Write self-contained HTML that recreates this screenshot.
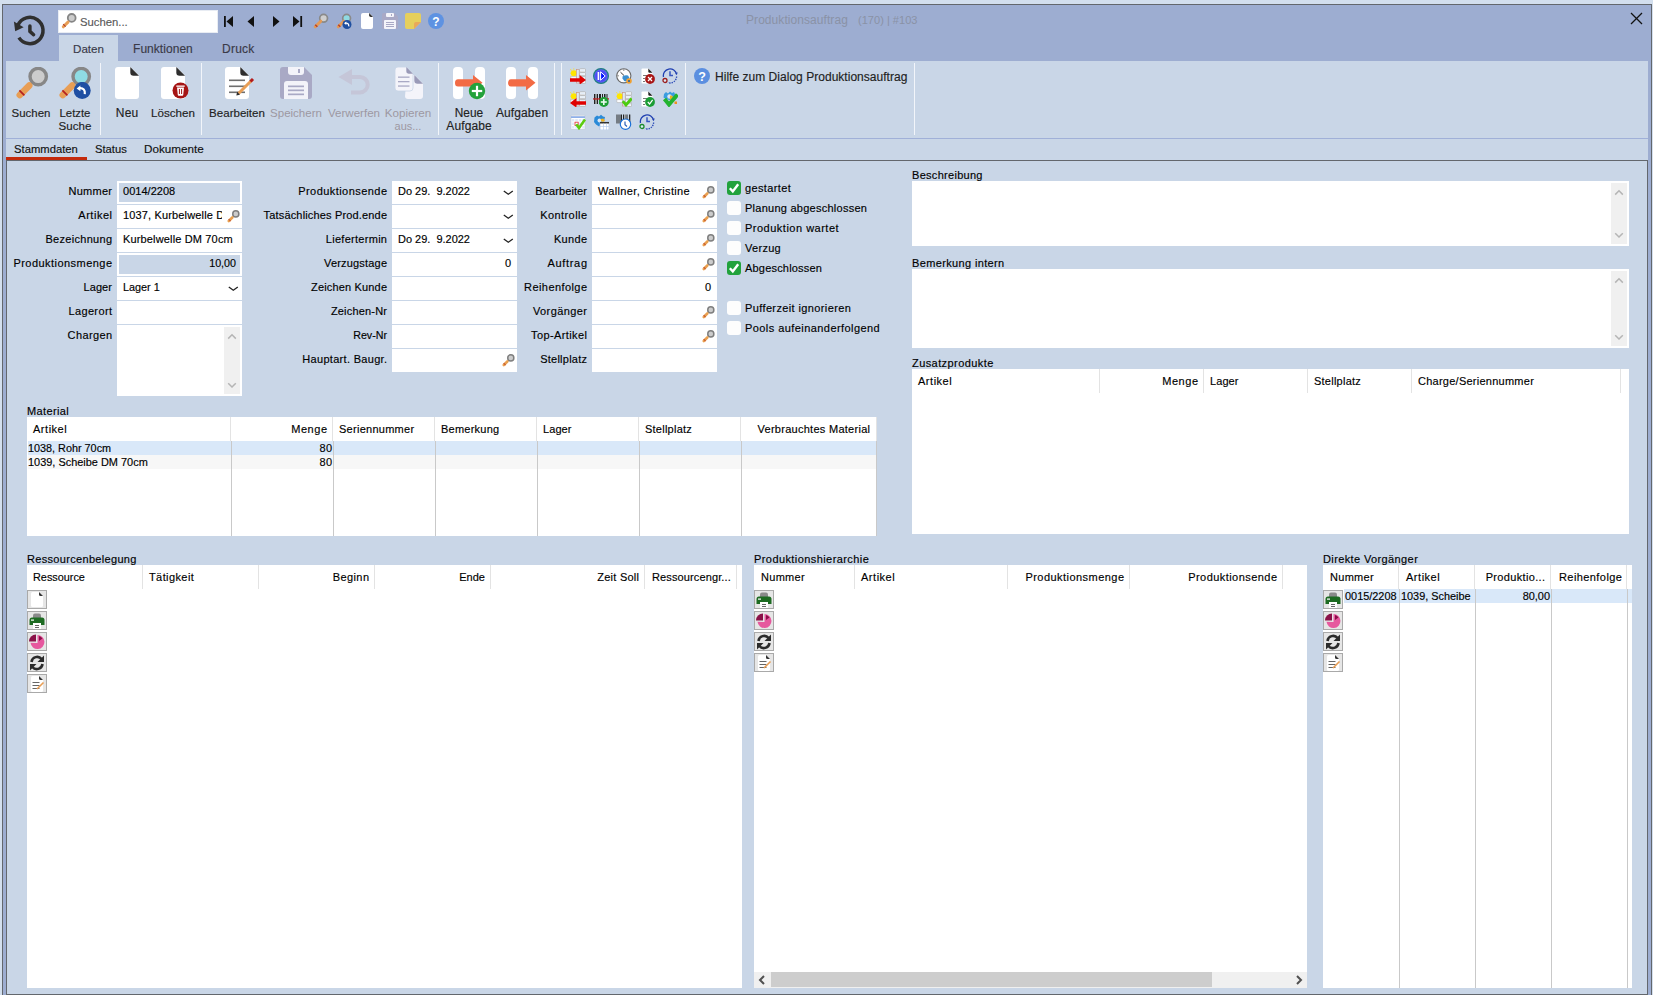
<!DOCTYPE html>
<html><head><meta charset="utf-8"><style>
html,body{margin:0;padding:0;width:1653px;height:995px;overflow:hidden;position:relative;font-family:"Liberation Sans",sans-serif;}
body>div,body>svg{position:absolute;}
.t{position:absolute;white-space:nowrap;line-height:20px;-webkit-text-stroke:0.15px currentColor;}
</style></head><body>
<div style="left:0px;top:0px;width:1653px;height:995px;background:#d3dfee;"></div>
<div style="left:2px;top:4px;width:1650px;height:991px;background:#63676d;"></div>
<div style="left:3px;top:5px;width:1648px;height:990px;background:#9dadd1;"></div>
<div style="left:6px;top:61px;width:1642px;height:77px;background:#c9d6e7;"></div>
<div style="left:6px;top:138px;width:1642px;height:1px;background:#a0b0d8;"></div>
<div style="left:6px;top:139px;width:1642px;height:21px;background:#c9d6e7;"></div>
<div style="left:6px;top:160px;width:1642px;height:835px;background:#63676d;"></div>
<div style="left:7px;top:161px;width:1640px;height:833px;background:#c9d6e7;"></div>
<div style="left:6px;top:157px;width:81px;height:3px;background:#c42a0c;"></div>
<div style="left:59px;top:35px;width:59px;height:26px;background:#c9d6e7;"></div>
<svg style="position:absolute;left:0px;top:0px;" width="50" height="50" viewBox="0 0 50 50"><path d="M 18.9 37.6 A 13.1 13.1 0 1 0 17.9 25.3" fill="none" stroke="#2f2f2f" stroke-width="3.5"/><polygon points="13.9,21.6 15.2,31.2 23.6,27.3" fill="#2f2f2f"/><polyline points="29.9,25.9 29.9,31.4 33.6,34.7" fill="none" stroke="#2f2f2f" stroke-width="3.5" stroke-linecap="round" stroke-linejoin="round"/></svg>
<div style="left:58px;top:10px;width:160px;height:23px;background:#ffffff;box-shadow:inset 0 0 0 1px #e8ecf3"></div>
<svg style="position:absolute;left:61px;top:13px;" width="16" height="16" viewBox="0 0 16 16"><circle cx="10.7" cy="4.9" r="3.9" fill="#cccccc" stroke="#858585" stroke-width="1.8"/><line x1="7" y1="9.1" x2="2.3" y2="13.8" stroke="#e89e55" stroke-width="3" stroke-linecap="round"/><line x1="2.2" y1="11.2" x2="4.6" y2="13.6" stroke="#b5402a" stroke-width="1.2"/></svg>
<div class="t" style="left:80px;top:12px;font-size:11.31px;color:#5a5a5a;">Suchen...</div>
<svg style="position:absolute;left:224px;top:16px;" width="10" height="11" viewBox="0 0 10 11"><rect x="0" y="0" width="1.8" height="11" fill="#111"/><polygon points="9,0 9,11 2.5,5.5" fill="#111"/></svg>
<svg style="position:absolute;left:247px;top:16px;" width="8" height="11" viewBox="0 0 8 11"><polygon points="7,0 7,11 0.5,5.5" fill="#111"/></svg>
<svg style="position:absolute;left:273px;top:16px;" width="8" height="11" viewBox="0 0 8 11"><polygon points="0,0 0,11 6.5,5.5" fill="#111"/></svg>
<svg style="position:absolute;left:293px;top:16px;" width="10" height="11" viewBox="0 0 10 11"><polygon points="0,0 0,11 6.5,5.5" fill="#111"/><rect x="7.3" y="0" width="1.8" height="11" fill="#111"/></svg>
<svg style="position:absolute;left:313px;top:13px;" width="16" height="16" viewBox="0 0 16 16"><circle cx="10.6" cy="5.3" r="3.9" fill="#cfcfcf" stroke="#8a8a8a" stroke-width="1.7"/><line x1="7.8" y1="8.2" x2="2.2" y2="13.8" stroke="#e59a55" stroke-width="3" stroke-linecap="round"/><line x1="3.8" y1="12.2" x2="2.8" y2="13.2" stroke="#b5402a" stroke-width="3"/></svg>
<svg style="position:absolute;left:336px;top:13px;" width="16" height="16" viewBox="0 0 16 16"><circle cx="10.6" cy="5.3" r="3.9" fill="#8fdbe3" stroke="#8a8a8a" stroke-width="1.7"/><line x1="7.8" y1="8.2" x2="2.2" y2="13.8" stroke="#e59a55" stroke-width="3" stroke-linecap="round"/><line x1="3.8" y1="12.2" x2="2.8" y2="13.2" stroke="#b5402a" stroke-width="3"/><circle cx="11" cy="11.5" r="4.5" fill="#1f4fa0"/><path d="M 9.2 10.2 Q 13 9.5 12.8 13.4" fill="none" stroke="#fff" stroke-width="1.3"/><polygon points="8,10.3 10.3,8.6 10.3,12" fill="#fff"/></svg>
<svg style="position:absolute;left:361px;top:13px;" width="13" height="16" viewBox="0 0 13 16"><path d="M2,0 H8.3 L12,3.7 V14 Q12,16 10,16 H2 Q0,16 0,14 V2 Q0,0 2,0 Z" fill="#fff"/><path d="M8.1,0 L12,3.9 H9.8 Q8.1,3.9 8.1,2.2 Z" fill="#2e2e2e"/></svg>
<svg style="position:absolute;left:382px;top:13px;" width="16" height="16" viewBox="0 0 16 16"><path d="M1.5,0 H12.5 L16,3.5 V14.5 Q16,16 14.5,16 H1.5 Q0,16 0,14.5 V1.5 Q0,0 1.5,0 Z" fill="#a9a9c6"/><rect x="4" y="0" width="8" height="4" rx="1" fill="#f4f4fa"/><rect x="9" y="1" width="1" height="2" fill="#a9a9c6"/><rect x="2" y="7" width="12" height="9" rx="1" fill="#f4f4fa"/><rect x="4" y="9" width="8" height="1" fill="#a9a9c6"/><rect x="4" y="11" width="8" height="1" fill="#a9a9c6"/><rect x="4" y="13" width="8" height="1" fill="#a9a9c6"/></svg>
<svg style="position:absolute;left:405px;top:13px;" width="16" height="16" viewBox="0 0 16 16"><path d="M2,0 H14 Q16,0 16,2 V9 L9,16 H2 Q0,16 0,14 V2 Q0,0 2,0 Z" fill="#e6cf5c"/><path d="M16,9 L9,16 V11 Q9,9 11,9 Z" fill="#e9a85a"/></svg>
<svg style="position:absolute;left:428px;top:13px;" width="16" height="16" viewBox="0 0 16 16"><circle cx="8" cy="8" r="8" fill="#5e92e2"/><text x="8" y="12.6" text-anchor="middle" font-family="Liberation Sans" font-weight="bold" font-size="12" fill="#fff">?</text></svg>
<div class="t" style="left:746px;top:10px;font-size:12.00px;color:#8a92a6;letter-spacing:0.063px;-webkit-text-stroke:0">Produktionsauftrag</div>
<div class="t" style="left:858px;top:10px;font-size:11.07px;color:#8a92a6;-webkit-text-stroke:0">(170) | #103</div>
<svg style="position:absolute;left:1630px;top:12px;" width="13" height="13" viewBox="0 0 13 13"><line x1="1" y1="1" x2="12" y2="12" stroke="#111" stroke-width="1.3"/><line x1="12" y1="1" x2="1" y2="12" stroke="#111" stroke-width="1.3"/></svg>
<div class="t" style="left:73px;top:39px;font-size:11.61px;color:#3a3a48;">Daten</div>
<div class="t" style="left:133px;top:39px;font-size:12.00px;color:#3a3a48;letter-spacing:0.047px;">Funktionen</div>
<div class="t" style="left:222px;top:39px;font-size:12.00px;color:#3a3a48;letter-spacing:0.239px;">Druck</div>
<div style="left:100px;top:63px;width:1px;height:72px;background:#f2f5fa;"></div>
<div style="left:201px;top:63px;width:1px;height:72px;background:#f2f5fa;"></div>
<div style="left:438px;top:63px;width:1px;height:72px;background:#f2f5fa;"></div>
<div style="left:554px;top:63px;width:1px;height:72px;background:#f2f5fa;"></div>
<div style="left:561px;top:63px;width:1px;height:72px;background:#f2f5fa;"></div>
<div style="left:685px;top:63px;width:1px;height:72px;background:#f2f5fa;"></div>
<div style="left:914px;top:63px;width:1px;height:72px;background:#f2f5fa;"></div>
<svg style="position:absolute;left:16px;top:67px;" width="34" height="34" viewBox="0 0 34 34"><circle cx="22.2" cy="9.6" r="8.2" fill="#cccccc" stroke="#878787" stroke-width="3.4"/><line x1="16" y1="15.8" x2="12.5" y2="19.3" stroke="#878787" stroke-width="2.6"/><line x1="13.2" y1="18.6" x2="3.8" y2="28" stroke="#e89e55" stroke-width="6.6" stroke-linecap="round"/><line x1="3.4" y1="23.4" x2="8.4" y2="28.4" stroke="#b32020" stroke-width="1.7"/></svg>
<svg style="position:absolute;left:59px;top:67px;" width="34" height="34" viewBox="0 0 34 34"><circle cx="22.2" cy="9.6" r="8.2" fill="#8fdce4" stroke="#878787" stroke-width="3.4"/><line x1="16" y1="15.8" x2="12.5" y2="19.3" stroke="#878787" stroke-width="2.6"/><line x1="13.2" y1="18.6" x2="3.8" y2="28" stroke="#e89e55" stroke-width="6.6" stroke-linecap="round"/><line x1="3.4" y1="23.4" x2="8.4" y2="28.4" stroke="#b32020" stroke-width="1.7"/></svg>
<svg style="position:absolute;left:73px;top:82px;" width="18" height="18" viewBox="0 0 18 18"><circle cx="9.2" cy="8.4" r="8.5" fill="#1f4fa3"/><path d="M 6.2 6.2 Q 12.6 5.6 11.8 12.2" fill="none" stroke="#fff" stroke-width="2.2"/><polygon points="3.6,6.4 7.4,3.4 7.4,9.2" fill="#fff"/></svg>
<div class="t" style="left:-119.00px;width:300px;top:103px;font-size:11.44px;color:#222;text-align:center;">Suchen</div>
<div class="t" style="left:-75.00px;width:300px;top:103px;font-size:11.34px;color:#222;text-align:center;">Letzte</div>
<div class="t" style="left:-75.00px;width:300px;top:116px;font-size:11.57px;color:#222;text-align:center;">Suche</div>
<svg style="position:absolute;left:115px;top:67px;" width="25" height="32" viewBox="0 0 25 32"><path d="M3,0 H15.5 L24,8.5 V29 Q24,32 21,32 H3 Q0,32 0,29 V3 Q0,0 3,0 Z" fill="#fff"/><path d="M15.3,0 L24,8.7 H18.5 Q15.3,8.7 15.3,5.5 Z" fill="#2e2e2e"/></svg>
<div class="t" style="left:-22.93px;width:300px;top:103px;font-size:12.00px;color:#222;text-align:center;letter-spacing:0.142px;">Neu</div>
<svg style="position:absolute;left:161px;top:67px;" width="25" height="32" viewBox="0 0 25 32"><path d="M3,0 H15.5 L24,8.5 V29 Q24,32 21,32 H3 Q0,32 0,29 V3 Q0,0 3,0 Z" fill="#fff"/><path d="M15.3,0 L24,8.7 H18.5 Q15.3,8.7 15.3,5.5 Z" fill="#2e2e2e"/></svg>
<svg style="position:absolute;left:172px;top:82px;" width="17" height="17" viewBox="0 0 17 17"><circle cx="8.5" cy="8.5" r="8" fill="#a51414"/><rect x="4.3" y="3.5" width="8.4" height="1.3" fill="#fff"/><path d="M5,5.5 H12 L11.2,13 Q11.1,13.8 10.3,13.8 H6.7 Q5.9,13.8 5.8,13 Z" fill="#fff"/><rect x="6.9" y="7" width="1" height="5" fill="#a51414"/><rect x="9.1" y="7" width="1" height="5" fill="#a51414"/></svg>
<div class="t" style="left:23.00px;width:300px;top:103px;font-size:11.58px;color:#222;text-align:center;">Löschen</div>
<svg style="position:absolute;left:225px;top:67px;" width="30" height="32" viewBox="0 0 30 32"><path d="M3,0 H15.5 L24,8.5 V29 Q24,32 21,32 H3 Q0,32 0,29 V3 Q0,0 3,0 Z" fill="#fff"/><path d="M15.3,0 L24,8.7 H18.5 Q15.3,8.7 15.3,5.5 Z" fill="#2e2e2e"/><rect x="4" y="12.5" width="16" height="1.6" fill="#6f6f6f"/><rect x="4" y="18.5" width="16" height="1.6" fill="#6f6f6f"/><rect x="4" y="24.5" width="16" height="1.6" fill="#6f6f6f"/><line x1="13.5" y1="26.5" x2="26.5" y2="13.5" stroke="#e89e55" stroke-width="3"/><line x1="25.5" y1="14.5" x2="28" y2="12" stroke="#b31c1c" stroke-width="3"/><polygon points="11.3,28.5 12.2,24.8 15,27.7" fill="#2e2e2e"/></svg>
<div class="t" style="left:87.00px;width:300px;top:103px;font-size:11.54px;color:#222;text-align:center;">Bearbeiten</div>
<svg style="position:absolute;left:280px;top:67px;" width="32" height="32" viewBox="0 0 32 32"><path d="M3,0 H24 L32,8 V29 Q32,32 29,32 H3 Q0,32 0,29 V3 Q0,0 3,0 Z" fill="#a9a9c5"/><path d="M8,0 H24 V5 Q24,8 21,8 H11 Q8,8 8,5 Z" fill="#f3f3f9"/><rect x="18" y="2" width="2" height="4" fill="#a9a9c5"/><path d="M4,17 Q4,14 7,14 H25 Q28,14 28,17 V32 H4 Z" fill="#f3f3f9"/><rect x="8" y="18.5" width="16" height="1.7" fill="#a9a9c5"/><rect x="8" y="22.5" width="16" height="1.7" fill="#a9a9c5"/><rect x="8" y="26.5" width="16" height="1.7" fill="#a9a9c5"/></svg>
<div class="t" style="left:146.00px;width:300px;top:103px;font-size:11.50px;color:#9d98a2;text-align:center;-webkit-text-stroke:0">Speichern</div>
<svg style="position:absolute;left:338px;top:69px;" width="34" height="28" viewBox="0 0 34 28"><path d="M 13 8 H 22 A 7.7 7.7 0 0 1 22 23.4 H 13" fill="none" stroke="#c5c6d8" stroke-width="4"/><polygon points="0.5,8 14,0 14,16" fill="#c5c6d8"/></svg>
<div class="t" style="left:204.00px;width:300px;top:103px;font-size:11.55px;color:#9d98a2;text-align:center;-webkit-text-stroke:0">Verwerfen</div>
<svg style="position:absolute;left:395px;top:67px;" width="29" height="33" viewBox="0 0 29 33"><path d="M12,8 H19.5 L28,16.5 V29 Q28,32 25,32 H13 Q10,32 10,29 Z" fill="#f4f4fa"/><path d="M19.3,8 L28,16.7 H22.5 Q19.3,16.7 19.3,13.5 Z" fill="#9a9ab8"/><path d="M3,0 H11.5 L18,6.5 V21 Q18,24 15,24 H3 Q0,24 0,21 V3 Q0,0 3,0 Z" fill="#f4f4fa" stroke="#c9d6e7" stroke-width="0.8"/><path d="M11.3,0 L18,6.7 H14 Q11.3,6.7 11.3,4 Z" fill="#9a9ab8"/><rect x="3" y="9.5" width="11.5" height="1.3" fill="#a9a9c5"/><rect x="3" y="14" width="11.5" height="1.3" fill="#a9a9c5"/><rect x="3" y="18.4" width="11.5" height="1.3" fill="#a9a9c5"/></svg>
<div class="t" style="left:258.00px;width:300px;top:103px;font-size:11.66px;color:#9d98a2;text-align:center;-webkit-text-stroke:0">Kopieren</div>
<div class="t" style="left:258.00px;width:300px;top:116px;font-size:10.95px;color:#9d98a2;text-align:center;-webkit-text-stroke:0">aus...</div>
<svg style="position:absolute;left:453px;top:67px;" width="34" height="32" viewBox="0 0 34 32"><rect x="0" y="0" width="10" height="32" rx="4" fill="#fff"/><rect x="22" y="0" width="10" height="32" rx="4" fill="#fff"/><path d="M5,12.3 H20 V8 L29.5,15.8 L20,23.5 V19.5 H5 Q2,19.5 2,16 Q2,12.3 5,12.3 Z" fill="#f26b45"/></svg>
<svg style="position:absolute;left:468px;top:82px;" width="18" height="18" viewBox="0 0 18 18"><circle cx="9" cy="9" r="8.2" fill="#23a13b"/><rect x="7.9" y="3.8" width="2.2" height="10.4" fill="#fff"/><rect x="3.8" y="7.9" width="10.4" height="2.2" fill="#fff"/></svg>
<div class="t" style="left:319.00px;width:300px;top:103px;font-size:11.88px;color:#222;text-align:center;">Neue</div>
<div class="t" style="left:319.07px;width:300px;top:116px;font-size:12.00px;color:#222;text-align:center;letter-spacing:0.130px;">Aufgabe</div>
<svg style="position:absolute;left:506px;top:67px;" width="34" height="32" viewBox="0 0 34 32"><rect x="0" y="0" width="10" height="32" rx="4" fill="#fff"/><rect x="22" y="0" width="10" height="32" rx="4" fill="#fff"/><path d="M5,12.3 H20 V8 L29.5,15.8 L20,23.5 V19.5 H5 Q2,19.5 2,16 Q2,12.3 5,12.3 Z" fill="#f26b45"/></svg>
<div class="t" style="left:372.06px;width:300px;top:103px;font-size:12.00px;color:#222;text-align:center;letter-spacing:0.116px;">Aufgaben</div>
<svg style="position:absolute;left:694px;top:68px;" width="16" height="16" viewBox="0 0 16 16"><circle cx="8" cy="8" r="8" fill="#5b8fe0"/><text x="8" y="12.7" text-anchor="middle" font-family="Liberation Sans" font-weight="bold" font-size="12.5" fill="#fff">?</text></svg>
<div class="t" style="left:715px;top:67px;font-size:12.00px;color:#222;letter-spacing:0.028px;">Hilfe zum Dialog Produktionsauftrag</div>
<div class="t" style="left:14px;top:139px;font-size:11.25px;color:#111;">Stammdaten</div>
<div class="t" style="left:95px;top:139px;font-size:11.21px;color:#111;">Status</div>
<div class="t" style="left:144px;top:139px;font-size:11.69px;color:#111;">Dokumente</div>
<div class="t" style="right:1540.71px;top:181px;font-size:11.00px;color:#000;text-align:right;letter-spacing:0.286px;">Nummer</div>
<div class="t" style="right:1540.48px;top:205px;font-size:11.00px;color:#000;text-align:right;letter-spacing:0.523px;">Artikel</div>
<div class="t" style="right:1540.70px;top:229px;font-size:11.00px;color:#000;text-align:right;letter-spacing:0.299px;">Bezeichnung</div>
<div class="t" style="right:1540.54px;top:253px;font-size:11.00px;color:#000;text-align:right;letter-spacing:0.458px;">Produktionsmenge</div>
<div class="t" style="right:1540.91px;top:277px;font-size:11.00px;color:#000;text-align:right;letter-spacing:0.090px;">Lager</div>
<div class="t" style="right:1540.63px;top:301px;font-size:11.00px;color:#000;text-align:right;letter-spacing:0.374px;">Lagerort</div>
<div class="t" style="right:1540.63px;top:325px;font-size:11.00px;color:#000;text-align:right;letter-spacing:0.366px;">Chargen</div>
<div style="left:117px;top:181px;width:125px;height:23px;background:#ffffff;"></div>
<div style="left:119px;top:183px;width:121px;height:19px;background:#c9d6e7;"></div>
<div class="t" style="left:123px;top:181px;font-size:11.00px;color:#000;letter-spacing:0.025px;">0014/2208</div>
<div style="left:117px;top:205px;width:125px;height:23px;background:#ffffff;"></div>
<svg style="position:absolute;left:227px;top:210px;" width="13" height="13" viewBox="0 0 13 13"><circle cx="8.8" cy="3.9" r="3.05" fill="#cccccc" stroke="#7e7e7e" stroke-width="1.5"/><line x1="5.3" y1="7.5" x2="1.8" y2="11" stroke="#e9a050" stroke-width="2.6" stroke-linecap="round"/><line x1="1.7" y1="9.2" x2="3.6" y2="11.1" stroke="#c85a30" stroke-width="1.2"/></svg>
<div class="t" style="left:123px;top:205px;font-size:11.00px;color:#000;width:99px;overflow:hidden;letter-spacing:0.15px">1037, Kurbelwelle DM 70cm</div>
<div style="left:117px;top:229px;width:125px;height:23px;background:#ffffff;"></div>
<div class="t" style="left:123px;top:229px;font-size:11.00px;color:#000;letter-spacing:0.151px;">Kurbelwelle DM 70cm</div>
<div style="left:117px;top:253px;width:125px;height:23px;background:#ffffff;"></div>
<div style="left:119px;top:255px;width:121px;height:19px;background:#c9d6e7;"></div>
<div class="t" style="right:1417.00px;top:253px;font-size:10.71px;color:#000;text-align:right;">10,00</div>
<div style="left:117px;top:277px;width:125px;height:23px;background:#ffffff;"></div>
<div class="t" style="left:123px;top:277px;font-size:10.85px;color:#000;">Lager 1</div>
<svg style="position:absolute;left:228px;top:286px;" width="12" height="6" viewBox="0 0 12 6"><polyline points="0.8,0.9 5.3,4.3 9.8,0.9" fill="none" stroke="#222" stroke-width="1.3"/></svg>
<div style="left:117px;top:301px;width:125px;height:23px;background:#ffffff;"></div>
<div style="left:117px;top:325px;width:125px;height:71px;background:#fff;"></div>
<div style="left:224px;top:327px;width:16px;height:67px;background:#f0f0f0;"></div>
<svg style="position:absolute;left:227px;top:333px;" width="10" height="7" viewBox="0 0 10 7"><polyline points="1.2,5.6 5,1.8 8.8,5.6" fill="none" stroke="#b5b5b5" stroke-width="1.5"/></svg>
<svg style="position:absolute;left:227px;top:382px;" width="10" height="7" viewBox="0 0 10 7"><polyline points="1.2,1.2 5,5 8.8,1.2" fill="none" stroke="#b5b5b5" stroke-width="1.5"/></svg>
<div class="t" style="right:1265.55px;top:181px;font-size:11.00px;color:#000;text-align:right;letter-spacing:0.446px;">Produktionsende</div>
<div class="t" style="right:1265.84px;top:205px;font-size:11.00px;color:#000;text-align:right;letter-spacing:0.161px;">Tatsächliches Prod.ende</div>
<div class="t" style="right:1265.72px;top:229px;font-size:11.00px;color:#000;text-align:right;letter-spacing:0.284px;">Liefertermin</div>
<div class="t" style="right:1265.82px;top:253px;font-size:11.00px;color:#000;text-align:right;letter-spacing:0.184px;">Verzugstage</div>
<div class="t" style="right:1265.84px;top:277px;font-size:11.00px;color:#000;text-align:right;letter-spacing:0.158px;">Zeichen Kunde</div>
<div class="t" style="right:1265.81px;top:301px;font-size:11.00px;color:#000;text-align:right;letter-spacing:0.188px;">Zeichen-Nr</div>
<div class="t" style="right:1266.00px;top:325px;font-size:10.67px;color:#000;text-align:right;">Rev-Nr</div>
<div class="t" style="right:1265.69px;top:349px;font-size:11.00px;color:#000;text-align:right;letter-spacing:0.306px;">Hauptart. Baugr.</div>
<div style="left:392px;top:181px;width:125px;height:23px;background:#ffffff;"></div>
<div class="t" style="left:398px;top:181px;font-size:10.97px;color:#000;">Do 29.&nbsp; 9.2022</div>
<svg style="position:absolute;left:503px;top:190px;" width="12" height="6" viewBox="0 0 12 6"><polyline points="0.8,0.9 5.3,4.3 9.8,0.9" fill="none" stroke="#222" stroke-width="1.3"/></svg>
<div style="left:392px;top:205px;width:125px;height:23px;background:#ffffff;"></div>
<svg style="position:absolute;left:503px;top:214px;" width="12" height="6" viewBox="0 0 12 6"><polyline points="0.8,0.9 5.3,4.3 9.8,0.9" fill="none" stroke="#222" stroke-width="1.3"/></svg>
<div style="left:392px;top:229px;width:125px;height:23px;background:#ffffff;"></div>
<div class="t" style="left:398px;top:229px;font-size:10.97px;color:#000;">Do 29.&nbsp; 9.2022</div>
<svg style="position:absolute;left:503px;top:238px;" width="12" height="6" viewBox="0 0 12 6"><polyline points="0.8,0.9 5.3,4.3 9.8,0.9" fill="none" stroke="#222" stroke-width="1.3"/></svg>
<div style="left:392px;top:253px;width:125px;height:23px;background:#ffffff;"></div>
<div class="t" style="right:1142.00px;top:253px;font-size:11.00px;color:#000;text-align:right;">0</div>
<div style="left:392px;top:277px;width:125px;height:23px;background:#ffffff;"></div>
<div style="left:392px;top:301px;width:125px;height:23px;background:#ffffff;"></div>
<div style="left:392px;top:325px;width:125px;height:23px;background:#ffffff;"></div>
<div style="left:392px;top:349px;width:125px;height:23px;background:#ffffff;"></div>
<svg style="position:absolute;left:502px;top:354px;" width="13" height="13" viewBox="0 0 13 13"><circle cx="8.8" cy="3.9" r="3.05" fill="#cccccc" stroke="#7e7e7e" stroke-width="1.5"/><line x1="5.3" y1="7.5" x2="1.8" y2="11" stroke="#e9a050" stroke-width="2.6" stroke-linecap="round"/><line x1="1.7" y1="9.2" x2="3.6" y2="11.1" stroke="#c85a30" stroke-width="1.2"/></svg>
<div class="t" style="right:1065.90px;top:181px;font-size:11.00px;color:#000;text-align:right;letter-spacing:0.104px;">Bearbeiter</div>
<div class="t" style="right:1065.58px;top:205px;font-size:11.00px;color:#000;text-align:right;letter-spacing:0.422px;">Kontrolle</div>
<div class="t" style="right:1065.68px;top:229px;font-size:11.00px;color:#000;text-align:right;letter-spacing:0.322px;">Kunde</div>
<div class="t" style="right:1065.34px;top:253px;font-size:11.00px;color:#000;text-align:right;letter-spacing:0.655px;">Auftrag</div>
<div class="t" style="right:1065.58px;top:277px;font-size:11.00px;color:#000;text-align:right;letter-spacing:0.418px;">Reihenfolge</div>
<div class="t" style="right:1065.58px;top:301px;font-size:11.00px;color:#000;text-align:right;letter-spacing:0.417px;">Vorgänger</div>
<div class="t" style="right:1065.60px;top:325px;font-size:11.00px;color:#000;text-align:right;letter-spacing:0.403px;">Top-Artikel</div>
<div class="t" style="right:1065.76px;top:349px;font-size:11.00px;color:#000;text-align:right;letter-spacing:0.240px;">Stellplatz</div>
<div style="left:592px;top:181px;width:125px;height:23px;background:#ffffff;"></div>
<div class="t" style="left:598px;top:181px;font-size:11.00px;color:#000;letter-spacing:0.347px;">Wallner, Christine</div>
<svg style="position:absolute;left:702px;top:186px;" width="13" height="13" viewBox="0 0 13 13"><circle cx="8.8" cy="3.9" r="3.05" fill="#cccccc" stroke="#7e7e7e" stroke-width="1.5"/><line x1="5.3" y1="7.5" x2="1.8" y2="11" stroke="#e9a050" stroke-width="2.6" stroke-linecap="round"/><line x1="1.7" y1="9.2" x2="3.6" y2="11.1" stroke="#c85a30" stroke-width="1.2"/></svg>
<div style="left:592px;top:205px;width:125px;height:23px;background:#ffffff;"></div>
<svg style="position:absolute;left:702px;top:210px;" width="13" height="13" viewBox="0 0 13 13"><circle cx="8.8" cy="3.9" r="3.05" fill="#cccccc" stroke="#7e7e7e" stroke-width="1.5"/><line x1="5.3" y1="7.5" x2="1.8" y2="11" stroke="#e9a050" stroke-width="2.6" stroke-linecap="round"/><line x1="1.7" y1="9.2" x2="3.6" y2="11.1" stroke="#c85a30" stroke-width="1.2"/></svg>
<div style="left:592px;top:229px;width:125px;height:23px;background:#ffffff;"></div>
<svg style="position:absolute;left:702px;top:234px;" width="13" height="13" viewBox="0 0 13 13"><circle cx="8.8" cy="3.9" r="3.05" fill="#cccccc" stroke="#7e7e7e" stroke-width="1.5"/><line x1="5.3" y1="7.5" x2="1.8" y2="11" stroke="#e9a050" stroke-width="2.6" stroke-linecap="round"/><line x1="1.7" y1="9.2" x2="3.6" y2="11.1" stroke="#c85a30" stroke-width="1.2"/></svg>
<div style="left:592px;top:253px;width:125px;height:23px;background:#ffffff;"></div>
<svg style="position:absolute;left:702px;top:258px;" width="13" height="13" viewBox="0 0 13 13"><circle cx="8.8" cy="3.9" r="3.05" fill="#cccccc" stroke="#7e7e7e" stroke-width="1.5"/><line x1="5.3" y1="7.5" x2="1.8" y2="11" stroke="#e9a050" stroke-width="2.6" stroke-linecap="round"/><line x1="1.7" y1="9.2" x2="3.6" y2="11.1" stroke="#c85a30" stroke-width="1.2"/></svg>
<div style="left:592px;top:277px;width:125px;height:23px;background:#ffffff;"></div>
<div class="t" style="right:942.00px;top:277px;font-size:11.00px;color:#000;text-align:right;">0</div>
<div style="left:592px;top:301px;width:125px;height:23px;background:#ffffff;"></div>
<svg style="position:absolute;left:702px;top:306px;" width="13" height="13" viewBox="0 0 13 13"><circle cx="8.8" cy="3.9" r="3.05" fill="#cccccc" stroke="#7e7e7e" stroke-width="1.5"/><line x1="5.3" y1="7.5" x2="1.8" y2="11" stroke="#e9a050" stroke-width="2.6" stroke-linecap="round"/><line x1="1.7" y1="9.2" x2="3.6" y2="11.1" stroke="#c85a30" stroke-width="1.2"/></svg>
<div style="left:592px;top:325px;width:125px;height:23px;background:#ffffff;"></div>
<svg style="position:absolute;left:702px;top:330px;" width="13" height="13" viewBox="0 0 13 13"><circle cx="8.8" cy="3.9" r="3.05" fill="#cccccc" stroke="#7e7e7e" stroke-width="1.5"/><line x1="5.3" y1="7.5" x2="1.8" y2="11" stroke="#e9a050" stroke-width="2.6" stroke-linecap="round"/><line x1="1.7" y1="9.2" x2="3.6" y2="11.1" stroke="#c85a30" stroke-width="1.2"/></svg>
<div style="left:592px;top:349px;width:125px;height:23px;background:#ffffff;"></div>
<svg style="position:absolute;left:727px;top:181px;" width="14" height="14" viewBox="0 0 14 14"><rect x="0" y="0" width="14" height="14" rx="3" fill="#22a23c"/><polyline points="2.8,7.2 5.8,10.4 11.2,3.3" fill="none" stroke="#fff" stroke-width="2.4"/></svg>
<div class="t" style="left:745px;top:178px;font-size:11.00px;color:#000;letter-spacing:0.373px;">gestartet</div>
<div style="left:727px;top:201px;width:14px;height:14px;background:#fdfdfd;border-radius:3px"></div>
<div class="t" style="left:745px;top:198px;font-size:11.00px;color:#000;letter-spacing:0.254px;">Planung abgeschlossen</div>
<div style="left:727px;top:221px;width:14px;height:14px;background:#fdfdfd;border-radius:3px"></div>
<div class="t" style="left:745px;top:218px;font-size:11.00px;color:#000;letter-spacing:0.499px;">Produktion wartet</div>
<div style="left:727px;top:241px;width:14px;height:14px;background:#fdfdfd;border-radius:3px"></div>
<div class="t" style="left:745px;top:238px;font-size:11.00px;color:#000;letter-spacing:0.290px;">Verzug</div>
<svg style="position:absolute;left:727px;top:261px;" width="14" height="14" viewBox="0 0 14 14"><rect x="0" y="0" width="14" height="14" rx="3" fill="#22a23c"/><polyline points="2.8,7.2 5.8,10.4 11.2,3.3" fill="none" stroke="#fff" stroke-width="2.4"/></svg>
<div class="t" style="left:745px;top:258px;font-size:11.00px;color:#000;letter-spacing:0.191px;">Abgeschlossen</div>
<div style="left:727px;top:301px;width:14px;height:14px;background:#fdfdfd;border-radius:3px"></div>
<div class="t" style="left:745px;top:298px;font-size:11.00px;color:#000;letter-spacing:0.377px;">Pufferzeit ignorieren</div>
<div style="left:727px;top:321px;width:14px;height:14px;background:#fdfdfd;border-radius:3px"></div>
<div class="t" style="left:745px;top:318px;font-size:11.00px;color:#000;letter-spacing:0.432px;">Pools aufeinanderfolgend</div>
<div class="t" style="left:912px;top:165px;font-size:11.00px;color:#000;letter-spacing:0.293px;">Beschreibung</div>
<div style="left:912px;top:181px;width:717px;height:65px;background:#fff;"></div>
<div style="left:1611px;top:183px;width:16px;height:61px;background:#f0f0f0;"></div>
<svg style="position:absolute;left:1614px;top:189px;" width="10" height="7" viewBox="0 0 10 7"><polyline points="1.2,5.6 5,1.8 8.8,5.6" fill="none" stroke="#b5b5b5" stroke-width="1.5"/></svg>
<svg style="position:absolute;left:1614px;top:232px;" width="10" height="7" viewBox="0 0 10 7"><polyline points="1.2,1.2 5,5 8.8,1.2" fill="none" stroke="#b5b5b5" stroke-width="1.5"/></svg>
<div class="t" style="left:912px;top:253px;font-size:11.00px;color:#000;letter-spacing:0.358px;">Bemerkung intern</div>
<div style="left:912px;top:269px;width:717px;height:79px;background:#fff;"></div>
<div style="left:1611px;top:271px;width:16px;height:75px;background:#f0f0f0;"></div>
<svg style="position:absolute;left:1614px;top:277px;" width="10" height="7" viewBox="0 0 10 7"><polyline points="1.2,5.6 5,1.8 8.8,5.6" fill="none" stroke="#b5b5b5" stroke-width="1.5"/></svg>
<svg style="position:absolute;left:1614px;top:334px;" width="10" height="7" viewBox="0 0 10 7"><polyline points="1.2,1.2 5,5 8.8,1.2" fill="none" stroke="#b5b5b5" stroke-width="1.5"/></svg>
<div class="t" style="left:912px;top:353px;font-size:11.00px;color:#000;letter-spacing:0.421px;">Zusatzprodukte</div>
<div style="left:912px;top:369px;width:717px;height:165px;background:#fff;"></div>
<div style="left:1099px;top:369px;width:1px;height:24px;background:#e3e3e3;"></div>
<div class="t" style="left:918px;top:371px;font-size:11.00px;color:#000;letter-spacing:0.523px;">Artikel</div>
<div style="left:1203px;top:369px;width:1px;height:24px;background:#e3e3e3;"></div>
<div class="t" style="right:454.46px;top:371px;font-size:11.00px;color:#000;text-align:right;letter-spacing:0.540px;">Menge</div>
<div style="left:1307px;top:369px;width:1px;height:24px;background:#e3e3e3;"></div>
<div class="t" style="left:1210px;top:371px;font-size:11.00px;color:#000;letter-spacing:0.090px;">Lager</div>
<div style="left:1411px;top:369px;width:1px;height:24px;background:#e3e3e3;"></div>
<div class="t" style="left:1314px;top:371px;font-size:11.00px;color:#000;letter-spacing:0.240px;">Stellplatz</div>
<div style="left:1620px;top:369px;width:1px;height:24px;background:#e3e3e3;"></div>
<div class="t" style="left:1418px;top:371px;font-size:11.00px;color:#000;letter-spacing:0.251px;">Charge/Seriennummer</div>
<div class="t" style="left:27px;top:401px;font-size:11.00px;color:#000;letter-spacing:0.382px;">Material</div>
<div style="left:27px;top:417px;width:850px;height:119px;background:#fff;"></div>
<div style="left:230px;top:417px;width:1px;height:24px;background:#e3e3e3;"></div>
<div class="t" style="left:33px;top:419px;font-size:11.00px;color:#000;letter-spacing:0.523px;">Artikel</div>
<div style="left:332px;top:417px;width:1px;height:24px;background:#e3e3e3;"></div>
<div class="t" style="right:1325.46px;top:419px;font-size:11.00px;color:#000;text-align:right;letter-spacing:0.540px;">Menge</div>
<div style="left:434px;top:417px;width:1px;height:24px;background:#e3e3e3;"></div>
<div class="t" style="left:339px;top:419px;font-size:11.00px;color:#000;letter-spacing:0.269px;">Seriennummer</div>
<div style="left:536px;top:417px;width:1px;height:24px;background:#e3e3e3;"></div>
<div class="t" style="left:441px;top:419px;font-size:11.00px;color:#000;letter-spacing:0.242px;">Bemerkung</div>
<div style="left:638px;top:417px;width:1px;height:24px;background:#e3e3e3;"></div>
<div class="t" style="left:543px;top:419px;font-size:11.00px;color:#000;letter-spacing:0.090px;">Lager</div>
<div style="left:740px;top:417px;width:1px;height:24px;background:#e3e3e3;"></div>
<div class="t" style="left:645px;top:419px;font-size:11.00px;color:#000;letter-spacing:0.240px;">Stellplatz</div>
<div style="left:876px;top:417px;width:1px;height:24px;background:#e3e3e3;"></div>
<div class="t" style="right:782.73px;top:419px;font-size:11.00px;color:#000;text-align:right;letter-spacing:0.275px;">Verbrauchtes Material</div>
<div style="left:28px;top:441px;width:848px;height:14px;background:#d9e8f9;"></div>
<div style="left:28px;top:455px;width:848px;height:14px;background:#f7f7f7;"></div>
<div style="left:231px;top:441px;width:1px;height:95px;background:#c9c9c9;"></div>
<div style="left:333px;top:441px;width:1px;height:95px;background:#c9c9c9;"></div>
<div style="left:435px;top:441px;width:1px;height:95px;background:#c9c9c9;"></div>
<div style="left:537px;top:441px;width:1px;height:95px;background:#c9c9c9;"></div>
<div style="left:639px;top:441px;width:1px;height:95px;background:#c9c9c9;"></div>
<div style="left:741px;top:441px;width:1px;height:95px;background:#c9c9c9;"></div>
<div style="left:876px;top:441px;width:1px;height:95px;background:#c9c9c9;"></div>
<div class="t" style="left:28px;top:438px;font-size:10.84px;color:#000;">1038, Rohr 70cm</div>
<div class="t" style="right:1320.65px;top:438px;font-size:11.00px;color:#000;text-align:right;letter-spacing:0.350px;">80</div>
<div class="t" style="left:28px;top:452px;font-size:10.94px;color:#000;">1039, Scheibe DM 70cm</div>
<div class="t" style="right:1320.65px;top:452px;font-size:11.00px;color:#000;text-align:right;letter-spacing:0.350px;">80</div>
<div class="t" style="left:27px;top:549px;font-size:11.00px;color:#000;letter-spacing:0.319px;">Ressourcenbelegung</div>
<div style="left:27px;top:565px;width:715px;height:423px;background:#fff;"></div>
<div style="left:142px;top:565px;width:1px;height:24px;background:#e3e3e3;"></div>
<div class="t" style="left:33px;top:567px;font-size:10.86px;color:#000;">Ressource</div>
<div style="left:258px;top:565px;width:1px;height:24px;background:#e3e3e3;"></div>
<div class="t" style="left:149px;top:567px;font-size:11.00px;color:#000;letter-spacing:0.403px;">Tätigkeit</div>
<div style="left:374px;top:565px;width:1px;height:24px;background:#e3e3e3;"></div>
<div class="t" style="right:1283.59px;top:567px;font-size:11.00px;color:#000;text-align:right;letter-spacing:0.407px;">Beginn</div>
<div style="left:490px;top:565px;width:1px;height:24px;background:#e3e3e3;"></div>
<div class="t" style="right:1167.97px;top:567px;font-size:11.00px;color:#000;text-align:right;letter-spacing:0.032px;">Ende</div>
<div style="left:644px;top:565px;width:1px;height:24px;background:#e3e3e3;"></div>
<div class="t" style="right:1013.74px;top:567px;font-size:11.00px;color:#000;text-align:right;letter-spacing:0.256px;">Zeit Soll</div>
<div style="left:736px;top:565px;width:1px;height:24px;background:#e3e3e3;"></div>
<div class="t" style="left:652px;top:567px;font-size:11.00px;color:#000;letter-spacing:0.125px;">Ressourcengr...</div>
<div class="t" style="left:754px;top:549px;font-size:11.00px;color:#000;letter-spacing:0.420px;">Produktionshierarchie</div>
<div style="left:754px;top:565px;width:553px;height:423px;background:#fff;"></div>
<div style="left:854px;top:565px;width:1px;height:24px;background:#e3e3e3;"></div>
<div class="t" style="left:761px;top:567px;font-size:11.00px;color:#000;letter-spacing:0.286px;">Nummer</div>
<div style="left:1007px;top:565px;width:1px;height:24px;background:#e3e3e3;"></div>
<div class="t" style="left:861px;top:567px;font-size:11.00px;color:#000;letter-spacing:0.523px;">Artikel</div>
<div style="left:1129px;top:565px;width:1px;height:24px;background:#e3e3e3;"></div>
<div class="t" style="right:528.54px;top:567px;font-size:11.00px;color:#000;text-align:right;letter-spacing:0.458px;">Produktionsmenge</div>
<div style="left:1282px;top:565px;width:1px;height:24px;background:#e3e3e3;"></div>
<div class="t" style="right:375.55px;top:567px;font-size:11.00px;color:#000;text-align:right;letter-spacing:0.446px;">Produktionsende</div>
<div style="left:754px;top:972px;width:553px;height:16px;background:#f0f0f0;"></div>
<div style="left:771px;top:972px;width:441px;height:15px;background:#cdcdcd;"></div>
<svg style="position:absolute;left:757px;top:975px;" width="10" height="10" viewBox="0 0 10 10"><polyline points="7,1 3,5 7,9" fill="none" stroke="#505050" stroke-width="2"/></svg>
<svg style="position:absolute;left:1294px;top:975px;" width="10" height="10" viewBox="0 0 10 10"><polyline points="3,1 7,5 3,9" fill="none" stroke="#505050" stroke-width="2"/></svg>
<div class="t" style="left:1323px;top:549px;font-size:11.00px;color:#000;letter-spacing:0.383px;">Direkte Vorgänger</div>
<div style="left:1323px;top:565px;width:309px;height:423px;background:#fff;"></div>
<div style="left:1398px;top:565px;width:1px;height:24px;background:#e3e3e3;"></div>
<div class="t" style="left:1330px;top:567px;font-size:11.00px;color:#000;letter-spacing:0.286px;">Nummer</div>
<div style="left:1474px;top:565px;width:1px;height:24px;background:#e3e3e3;"></div>
<div class="t" style="left:1406px;top:567px;font-size:11.00px;color:#000;letter-spacing:0.523px;">Artikel</div>
<div style="left:1550px;top:565px;width:1px;height:24px;background:#e3e3e3;"></div>
<div class="t" style="right:107.67px;top:567px;font-size:11.00px;color:#000;text-align:right;letter-spacing:0.333px;">Produktio...</div>
<div style="left:1626px;top:565px;width:1px;height:24px;background:#e3e3e3;"></div>
<div class="t" style="left:1559px;top:567px;font-size:11.00px;color:#000;letter-spacing:0.418px;">Reihenfolge</div>
<div style="left:1344px;top:589px;width:288px;height:14px;background:#d9e8f9;"></div>
<div style="left:1399px;top:589px;width:1px;height:399px;background:#c9c9c9;"></div>
<div style="left:1475px;top:589px;width:1px;height:399px;background:#c9c9c9;"></div>
<div style="left:1551px;top:589px;width:1px;height:399px;background:#c9c9c9;"></div>
<div style="left:1627px;top:589px;width:1px;height:399px;background:#c9c9c9;"></div>
<div class="t" style="left:1345px;top:586px;font-size:10.92px;color:#000;">0015/2208</div>
<div class="t" style="left:1401px;top:586px;font-size:10.88px;color:#000;">1039, Scheibe</div>
<div class="t" style="right:103.00px;top:586px;font-size:10.95px;color:#000;text-align:right;">80,00</div>
<div style="left:27px;top:590px;width:20px;height:19px;background:#e6e6e6;box-shadow:inset 0 0 0 1px #a9a9a9"></div>
<svg style="position:absolute;left:31px;top:592px;" width="12" height="15" viewBox="0 0 12 15"><path d="M1.5,0 H8 L12,4 V13.5 Q12,15 10.5,15 H1.5 Q0,15 0,13.5 V1.5 Q0,0 1.5,0 Z" fill="#fff"/><path d="M8,0 L12,4 H9.5 Q8,4 8,2.5 Z" fill="#333"/></svg>
<div style="left:27px;top:611px;width:20px;height:19px;background:#e6e6e6;box-shadow:inset 0 0 0 1px #a9a9a9"></div>
<svg style="position:absolute;left:29px;top:613px;" width="16" height="16" viewBox="0 0 16 16"><path d="M4,5 V2.5 Q4,0.5 6,0.5 H10 Q12,0.5 12,2.5 V5 Z" fill="#8a8a8a"/><path d="M0.5,12 V7 Q0.5,4.5 3,4.5 H13 Q15.5,4.5 15.5,7 V12 Z" fill="#1d6b22"/><rect x="2" y="6.5" width="3" height="1.2" fill="#fff"/><rect x="4" y="10" width="8" height="6" fill="#fff"/><rect x="6" y="12" width="4" height="0.9" fill="#555"/><rect x="6" y="14" width="4" height="0.9" fill="#555"/></svg>
<div style="left:27px;top:632px;width:20px;height:19px;background:#e6e6e6;box-shadow:inset 0 0 0 1px #a9a9a9"></div>
<svg style="position:absolute;left:29px;top:634px;" width="16" height="16" viewBox="0 0 16 16"><path d="M8.5,9 V1 A7 7 0 1 1 1.5,8.8 Z" fill="#e6589e"/><path d="M7,7.5 H0 A7 7 0 0 1 7,0.5 Z" fill="#8a1148"/><path d="M10,7 V2 A6 6 0 0 1 13.5,4.5 Z" fill="#8a1148"/></svg>
<div style="left:27px;top:653px;width:20px;height:19px;background:#e6e6e6;box-shadow:inset 0 0 0 1px #a9a9a9"></div>
<svg style="position:absolute;left:29px;top:655px;" width="16" height="16" viewBox="0 0 16 16"><path d="M2.5,7 A5.7 5.7 0 0 1 12.6,4" fill="none" stroke="#2b2b2b" stroke-width="2.6"/><polygon points="15,0.5 15,7 8.5,7" fill="#2b2b2b"/><path d="M13.5,9 A5.7 5.7 0 0 1 3.4,12" fill="none" stroke="#2b2b2b" stroke-width="2.6"/><polygon points="1,15.5 1,9 7.5,9" fill="#2b2b2b"/></svg>
<div style="left:27px;top:674px;width:20px;height:19px;background:#e6e6e6;box-shadow:inset 0 0 0 1px #a9a9a9"></div>
<svg style="position:absolute;left:31px;top:676px;" width="14" height="16" viewBox="0 0 14 16"><path d="M1.5,0 H8 L12,4 V14.5 Q12,16 10.5,16 H1.5 Q0,16 0,14.5 V1.5 Q0,0 1.5,0 Z" fill="#fff"/><path d="M8,0 L12,4 H9.5 Q8,4 8,2.5 Z" fill="#333"/><rect x="1.5" y="6" width="7" height="0.9" fill="#555"/><rect x="1.5" y="9" width="7" height="0.9" fill="#555"/><rect x="1.5" y="12" width="7" height="0.9" fill="#555"/><line x1="6" y1="13" x2="12.5" y2="6.5" stroke="#e89e55" stroke-width="1.6"/></svg>
<div style="left:754px;top:590px;width:20px;height:19px;background:#e6e6e6;box-shadow:inset 0 0 0 1px #a9a9a9"></div>
<svg style="position:absolute;left:756px;top:592px;" width="16" height="16" viewBox="0 0 16 16"><path d="M4,5 V2.5 Q4,0.5 6,0.5 H10 Q12,0.5 12,2.5 V5 Z" fill="#8a8a8a"/><path d="M0.5,12 V7 Q0.5,4.5 3,4.5 H13 Q15.5,4.5 15.5,7 V12 Z" fill="#1d6b22"/><rect x="2" y="6.5" width="3" height="1.2" fill="#fff"/><rect x="4" y="10" width="8" height="6" fill="#fff"/><rect x="6" y="12" width="4" height="0.9" fill="#555"/><rect x="6" y="14" width="4" height="0.9" fill="#555"/></svg>
<div style="left:1323px;top:590px;width:20px;height:19px;background:#e6e6e6;box-shadow:inset 0 0 0 1px #a9a9a9"></div>
<svg style="position:absolute;left:1325px;top:592px;" width="16" height="16" viewBox="0 0 16 16"><path d="M4,5 V2.5 Q4,0.5 6,0.5 H10 Q12,0.5 12,2.5 V5 Z" fill="#8a8a8a"/><path d="M0.5,12 V7 Q0.5,4.5 3,4.5 H13 Q15.5,4.5 15.5,7 V12 Z" fill="#1d6b22"/><rect x="2" y="6.5" width="3" height="1.2" fill="#fff"/><rect x="4" y="10" width="8" height="6" fill="#fff"/><rect x="6" y="12" width="4" height="0.9" fill="#555"/><rect x="6" y="14" width="4" height="0.9" fill="#555"/></svg>
<div style="left:754px;top:611px;width:20px;height:19px;background:#e6e6e6;box-shadow:inset 0 0 0 1px #a9a9a9"></div>
<svg style="position:absolute;left:756px;top:613px;" width="16" height="16" viewBox="0 0 16 16"><path d="M8.5,9 V1 A7 7 0 1 1 1.5,8.8 Z" fill="#e6589e"/><path d="M7,7.5 H0 A7 7 0 0 1 7,0.5 Z" fill="#8a1148"/><path d="M10,7 V2 A6 6 0 0 1 13.5,4.5 Z" fill="#8a1148"/></svg>
<div style="left:1323px;top:611px;width:20px;height:19px;background:#e6e6e6;box-shadow:inset 0 0 0 1px #a9a9a9"></div>
<svg style="position:absolute;left:1325px;top:613px;" width="16" height="16" viewBox="0 0 16 16"><path d="M8.5,9 V1 A7 7 0 1 1 1.5,8.8 Z" fill="#e6589e"/><path d="M7,7.5 H0 A7 7 0 0 1 7,0.5 Z" fill="#8a1148"/><path d="M10,7 V2 A6 6 0 0 1 13.5,4.5 Z" fill="#8a1148"/></svg>
<div style="left:754px;top:632px;width:20px;height:19px;background:#e6e6e6;box-shadow:inset 0 0 0 1px #a9a9a9"></div>
<svg style="position:absolute;left:756px;top:634px;" width="16" height="16" viewBox="0 0 16 16"><path d="M2.5,7 A5.7 5.7 0 0 1 12.6,4" fill="none" stroke="#2b2b2b" stroke-width="2.6"/><polygon points="15,0.5 15,7 8.5,7" fill="#2b2b2b"/><path d="M13.5,9 A5.7 5.7 0 0 1 3.4,12" fill="none" stroke="#2b2b2b" stroke-width="2.6"/><polygon points="1,15.5 1,9 7.5,9" fill="#2b2b2b"/></svg>
<div style="left:1323px;top:632px;width:20px;height:19px;background:#e6e6e6;box-shadow:inset 0 0 0 1px #a9a9a9"></div>
<svg style="position:absolute;left:1325px;top:634px;" width="16" height="16" viewBox="0 0 16 16"><path d="M2.5,7 A5.7 5.7 0 0 1 12.6,4" fill="none" stroke="#2b2b2b" stroke-width="2.6"/><polygon points="15,0.5 15,7 8.5,7" fill="#2b2b2b"/><path d="M13.5,9 A5.7 5.7 0 0 1 3.4,12" fill="none" stroke="#2b2b2b" stroke-width="2.6"/><polygon points="1,15.5 1,9 7.5,9" fill="#2b2b2b"/></svg>
<div style="left:754px;top:653px;width:20px;height:19px;background:#e6e6e6;box-shadow:inset 0 0 0 1px #a9a9a9"></div>
<svg style="position:absolute;left:758px;top:655px;" width="14" height="16" viewBox="0 0 14 16"><path d="M1.5,0 H8 L12,4 V14.5 Q12,16 10.5,16 H1.5 Q0,16 0,14.5 V1.5 Q0,0 1.5,0 Z" fill="#fff"/><path d="M8,0 L12,4 H9.5 Q8,4 8,2.5 Z" fill="#333"/><rect x="1.5" y="6" width="7" height="0.9" fill="#555"/><rect x="1.5" y="9" width="7" height="0.9" fill="#555"/><rect x="1.5" y="12" width="7" height="0.9" fill="#555"/><line x1="6" y1="13" x2="12.5" y2="6.5" stroke="#e89e55" stroke-width="1.6"/></svg>
<div style="left:1323px;top:653px;width:20px;height:19px;background:#e6e6e6;box-shadow:inset 0 0 0 1px #a9a9a9"></div>
<svg style="position:absolute;left:1327px;top:655px;" width="14" height="16" viewBox="0 0 14 16"><path d="M1.5,0 H8 L12,4 V14.5 Q12,16 10.5,16 H1.5 Q0,16 0,14.5 V1.5 Q0,0 1.5,0 Z" fill="#fff"/><path d="M8,0 L12,4 H9.5 Q8,4 8,2.5 Z" fill="#333"/><rect x="1.5" y="6" width="7" height="0.9" fill="#555"/><rect x="1.5" y="9" width="7" height="0.9" fill="#555"/><rect x="1.5" y="12" width="7" height="0.9" fill="#555"/><line x1="6" y1="13" x2="12.5" y2="6.5" stroke="#e89e55" stroke-width="1.6"/></svg>
<svg style="position:absolute;left:570px;top:68px;" width="16" height="16" viewBox="0 0 16 16"><circle cx="3.8" cy="5.2" r="3" fill="#ffe600"/><g stroke="#f2e14a" stroke-width="0.9"><line x1="0.3" y1="1" x2="1.6" y2="2.8"/><line x1="3.8" y1="0.2" x2="3.8" y2="1.8"/><line x1="7.4" y1="1" x2="6" y2="2.8"/><line x1="0" y1="5.2" x2="0.8" y2="5.2"/><line x1="0.3" y1="8.8" x2="1.4" y2="7.5"/></g><rect x="6.6" y="1.5" width="2.6" height="13.5" fill="#dbe8f6" stroke="#c89080" stroke-width="0.6"/><g fill="#fbfcfe" stroke="#a9a9a9" stroke-width="0.7"><rect x="9.6" y="0.8" width="6" height="3.2" rx="0.8"/><rect x="9.6" y="4.6" width="6" height="3.2" rx="0.8"/><rect x="9.6" y="8.4" width="6" height="3.2" rx="0.8"/><rect x="9.6" y="12.2" width="6" height="3.2" rx="0.8"/></g><g fill="#dde9f7"><rect x="10.4" y="1.6" width="4.4" height="1.2"/><rect x="10.4" y="5.4" width="4.4" height="1.2"/><rect x="10.4" y="9.2" width="4.4" height="1.2"/><rect x="10.4" y="13" width="4.4" height="1.2"/></g><rect x="0.8" y="8.6" width="5.6" height="3" rx="0.8" fill="#fbfcfe" stroke="#b0b0b0" stroke-width="0.6"/><path d="M0,10.2 H9.6 V7 L16,12 L9.6,16.6 V13.8 H0 Z" fill="#e00000"/></svg>
<svg style="position:absolute;left:570px;top:91px;" width="16" height="16" viewBox="0 0 16 16"><circle cx="3.8" cy="5.2" r="3" fill="#ffe600"/><g stroke="#f2e14a" stroke-width="0.9"><line x1="0.3" y1="1" x2="1.6" y2="2.8"/><line x1="3.8" y1="0.2" x2="3.8" y2="1.8"/><line x1="7.4" y1="1" x2="6" y2="2.8"/><line x1="0" y1="5.2" x2="0.8" y2="5.2"/><line x1="0.3" y1="8.8" x2="1.4" y2="7.5"/></g><rect x="6.6" y="1.5" width="2.6" height="13.5" fill="#dbe8f6" stroke="#c89080" stroke-width="0.6"/><g fill="#fbfcfe" stroke="#a9a9a9" stroke-width="0.7"><rect x="9.6" y="0.8" width="6" height="3.2" rx="0.8"/><rect x="9.6" y="4.6" width="6" height="3.2" rx="0.8"/><rect x="9.6" y="8.4" width="6" height="3.2" rx="0.8"/><rect x="9.6" y="12.2" width="6" height="3.2" rx="0.8"/></g><g fill="#dde9f7"><rect x="10.4" y="1.6" width="4.4" height="1.2"/><rect x="10.4" y="5.4" width="4.4" height="1.2"/><rect x="10.4" y="9.2" width="4.4" height="1.2"/><rect x="10.4" y="13" width="4.4" height="1.2"/></g><rect x="0.8" y="8.6" width="5.6" height="3" rx="0.8" fill="#fbfcfe" stroke="#b0b0b0" stroke-width="0.6"/><path d="M16,10.2 H6.4 V7 L0,12 L6.4,16.6 V13.8 H16 Z" fill="#e00000"/></svg>
<svg style="position:absolute;left:593px;top:68px;" width="16" height="16" viewBox="0 0 16 16"><circle cx="8" cy="8" r="7.4" fill="#5a5cf2" stroke="#208080" stroke-width="1.2"/><circle cx="8" cy="8" r="5.6" fill="#3a3cf6" opacity="0.5"/><rect x="4.6" y="4" width="1.6" height="8" fill="#fff"/><polygon points="7.6,3.8 12.2,8 7.6,12.2" fill="#0010ff" stroke="#fff" stroke-width="1"/></svg>
<svg style="position:absolute;left:616px;top:68px;" width="16" height="16" viewBox="0 0 16 16"><circle cx="7.8" cy="7.8" r="7.1" fill="#fdfdfd" stroke="#6a6a6a" stroke-width="1.1"/><line x1="4.5" y1="4.2" x2="8" y2="7.5" stroke="#222" stroke-width="0.9"/><line x1="7.8" y1="1.5" x2="7.8" y2="2.8" stroke="#444" stroke-width="0.8"/><line x1="1.5" y1="7.8" x2="2.8" y2="7.8" stroke="#444" stroke-width="0.8"/><path d="M6.5,8.5 Q9,6.8 12,7.5 L13.5,10 L10,13.5 Q7.5,13 6.5,10.5 Z" fill="#3a8fd0"/><circle cx="13" cy="13" r="2.8" fill="#f0a030"/><circle cx="13" cy="13" r="1" fill="#1d5ca8"/></svg>
<svg style="position:absolute;left:593px;top:91px;" width="16" height="16" viewBox="0 0 16 16"><g fill="#222"><rect x="1" y="3" width="1.5" height="10"/><rect x="4" y="3" width="1" height="10"/><rect x="6" y="3" width="2" height="10"/><rect x="9" y="3" width="1" height="10"/><rect x="11" y="3" width="1.5" height="10"/><rect x="13.5" y="3" width="1" height="10"/></g><rect x="2.5" y="3" width="1.5" height="10" fill="#999"/><rect x="0" y="7.3" width="16" height="1.3" fill="#c02020"/><circle cx="10.8" cy="11" r="4.9" fill="#1e9e34"/><rect x="10" y="8" width="1.6" height="6" fill="#eafbee"/><rect x="7.8" y="10.2" width="6" height="1.6" fill="#eafbee"/></svg>
<svg style="position:absolute;left:616px;top:91px;" width="16" height="16" viewBox="0 0 16 16"><circle cx="3.8" cy="5.2" r="3" fill="#ffe600"/><g stroke="#f2e14a" stroke-width="0.9"><line x1="0.3" y1="1" x2="1.6" y2="2.8"/><line x1="3.8" y1="0.2" x2="3.8" y2="1.8"/><line x1="7.4" y1="1" x2="6" y2="2.8"/><line x1="0" y1="5.2" x2="0.8" y2="5.2"/><line x1="0.3" y1="8.8" x2="1.4" y2="7.5"/></g><rect x="6.6" y="1.5" width="2.6" height="13.5" fill="#dbe8f6" stroke="#c89080" stroke-width="0.6"/><g fill="#fbfcfe" stroke="#a9a9a9" stroke-width="0.7"><rect x="9.6" y="0.8" width="6" height="3.2" rx="0.8"/><rect x="9.6" y="4.6" width="6" height="3.2" rx="0.8"/><rect x="9.6" y="8.4" width="6" height="3.2" rx="0.8"/><rect x="9.6" y="12.2" width="6" height="3.2" rx="0.8"/></g><g fill="#dde9f7"><rect x="10.4" y="1.6" width="4.4" height="1.2"/><rect x="10.4" y="5.4" width="4.4" height="1.2"/><rect x="10.4" y="9.2" width="4.4" height="1.2"/><rect x="10.4" y="13" width="4.4" height="1.2"/></g><rect x="0.8" y="8.6" width="5.6" height="3" rx="0.8" fill="#fbfcfe" stroke="#b0b0b0" stroke-width="0.6"/><polyline points="6.8,10.2 10,14 15.6,7.5" fill="none" stroke="#4ccc10" stroke-width="2.8"/></svg>
<svg style="position:absolute;left:641px;top:68px;" width="14" height="16" viewBox="0 0 14 16"><path d="M1.5,0.5 H7.5 L11.5,4.5 V14.5 Q11.5,15.5 10.5,15.5 H1.5 Q0.5,15.5 0.5,14.5 V1.5 Q0.5,0.5 1.5,0.5 Z" fill="#fff"/><path d="M7.3,0.5 L11.5,4.7 H8.5 Q7.3,4.7 7.3,3.5 Z" fill="#222"/><g fill="#555"><rect x="2" y="7" width="6" height="0.8"/><rect x="2" y="10" width="2" height="0.8"/><rect x="2" y="13" width="2" height="0.8"/></g><circle cx="9" cy="11" r="4.9" fill="#a81616"/><g stroke="#fff" stroke-width="1.3"><line x1="7" y1="9" x2="11" y2="13"/><line x1="11" y1="9" x2="7" y2="13"/></g></svg>
<svg style="position:absolute;left:641px;top:91px;" width="14" height="16" viewBox="0 0 14 16"><path d="M1.5,0.5 H7.5 L11.5,4.5 V14.5 Q11.5,15.5 10.5,15.5 H1.5 Q0.5,15.5 0.5,14.5 V1.5 Q0.5,0.5 1.5,0.5 Z" fill="#fff"/><path d="M7.3,0.5 L11.5,4.7 H8.5 Q7.3,4.7 7.3,3.5 Z" fill="#222"/><g fill="#555"><rect x="2" y="7" width="6" height="0.8"/><rect x="2" y="10" width="2" height="0.8"/><rect x="2" y="13" width="2" height="0.8"/></g><circle cx="9" cy="11" r="4.9" fill="#1a9c34"/><polyline points="6.8,11 8.6,13 11.6,8.8" fill="none" stroke="#fff" stroke-width="1.2"/></svg>
<svg style="position:absolute;left:662px;top:68px;" width="16" height="16" viewBox="0 0 16 16"><path d="M1.5,9 A6.6 6.6 0 1 1 14.6,6.3" fill="none" stroke="#1f3fb0" stroke-width="1.3"/><path d="M14.6,8.5 A6.6 6.6 0 0 1 6,14.7" fill="none" stroke="#2a4ab8" stroke-width="1.3" stroke-dasharray="1.4 1"/><polygon points="13.2,4.8 15.8,4.6 14.6,7" fill="#1f3fb0"/><path d="M8,3.2 V7.6 H11" fill="none" stroke="#3555c0" stroke-width="1.5"/><circle cx="3" cy="12.5" r="2" fill="#dceaf8" stroke="#9a1c1c" stroke-width="1.3"/></svg>
<svg style="position:absolute;left:639px;top:114px;" width="16" height="16" viewBox="0 0 16 16"><path d="M1.5,9 A6.6 6.6 0 1 1 14.6,6.3" fill="none" stroke="#1f3fb0" stroke-width="1.3"/><path d="M14.6,8.5 A6.6 6.6 0 0 1 6,14.7" fill="none" stroke="#2a4ab8" stroke-width="1.3" stroke-dasharray="1.4 1"/><polygon points="13.2,4.8 15.8,4.6 14.6,7" fill="#1f3fb0"/><path d="M8,3.2 V7.6 H11" fill="none" stroke="#3555c0" stroke-width="1.5"/><circle cx="3" cy="12.5" r="2" fill="#dceaf8" stroke="#1a8a2a" stroke-width="1.3"/></svg>
<svg style="position:absolute;left:662px;top:91px;" width="16" height="16" viewBox="0 0 16 16"><path d="M2,3 L4,1 L6,2.5 L8,0.5 L10,2 L12,1 L13.5,4 L15,6 L14,8.5 L11,9.5 L7,9 L4,8 L1.5,6.5 Z" fill="#3a9de0"/><circle cx="7.5" cy="5.5" r="2.2" fill="#dbe7f3"/><path d="M8,4.5 L10.5,4.8 L11.2,7.2 L9,9.5 L7.8,7.8 Z" fill="#f0b020"/><polyline points="2.5,8 7,13.5 15.5,3.5" fill="none" stroke="#22b330" stroke-width="4"/><rect x="12.5" y="10.5" width="2.5" height="2.5" fill="#f09020"/></svg>
<svg style="position:absolute;left:570px;top:114px;" width="16" height="16" viewBox="0 0 16 16"><rect x="1" y="1.2" width="14" height="14" fill="#fff" stroke="#c0c8d4" stroke-width="0.6"/><rect x="1" y="2.2" width="14" height="1.8" fill="#8fb0e8"/><g fill="#dfe9f7"><rect x="1.8" y="5" width="2.5" height="2.5"/><rect x="5.3" y="5" width="2.5" height="2.5"/><rect x="8.8" y="5" width="2.5" height="2.5"/><rect x="12.2" y="5" width="2.5" height="2.5"/><rect x="1.8" y="8.5" width="2.5" height="2.5"/><rect x="8.8" y="8.5" width="2.5" height="2.5"/><rect x="12.2" y="8.5" width="2.5" height="2.5"/><rect x="1.8" y="12" width="2.5" height="2.5"/><rect x="5.3" y="12" width="2.5" height="2.5"/><rect x="12.2" y="12" width="2.5" height="2.5"/></g><rect x="5" y="8.2" width="3.2" height="3.2" fill="none" stroke="#e03030" stroke-width="0.8"/><polyline points="6.3,10.3 9,14 15,5.5" fill="none" stroke="#5ccc10" stroke-width="2.6"/></svg>
<svg style="position:absolute;left:593px;top:114px;" width="16" height="16" viewBox="0 0 16 16"><path d="M1.5,3.5 L4,1.5 L6,2.5 L8,0.8 L10,2.5 L12,3 L11,7 L8,10 L6,12.5 L3,10.5 L1,8 Z" fill="#2a8ad8"/><circle cx="6.5" cy="6.5" r="2" fill="#dbe7f3"/><path d="M7.5,5 L10.5,4.5 L12,7 L9,9 Z" fill="#f0b020"/><rect x="7" y="8" width="9" height="8" fill="#fff" stroke="#98b8e8" stroke-width="0.6"/><rect x="7" y="8" width="9" height="1.5" fill="#333"/><g fill="#b0c8ee"><rect x="7" y="12" width="9" height="0.6"/><rect x="10" y="9.5" width="0.6" height="6.5"/><rect x="13" y="9.5" width="0.6" height="6.5"/></g></svg>
<svg style="position:absolute;left:616px;top:114px;" width="16" height="16" viewBox="0 0 16 16"><g fill="#222"><rect x="0.5" y="0.5" width="1" height="9"/><rect x="2.5" y="0.5" width="1" height="9"/><rect x="4.5" y="0.5" width="1.5" height="9"/><rect x="7" y="0.5" width="1" height="9"/><rect x="10.5" y="0.5" width="1" height="9"/><rect x="13" y="0.5" width="1.3" height="9"/></g><rect x="8.5" y="0.5" width="1.5" height="9" fill="#888"/><circle cx="9.5" cy="10.2" r="5.2" fill="#fff" stroke="#1a70d8" stroke-width="1.2"/><path d="M9,7.5 V10.8 L11,12.5" fill="none" stroke="#2a60b8" stroke-width="1.2"/></svg>
</body></html>
